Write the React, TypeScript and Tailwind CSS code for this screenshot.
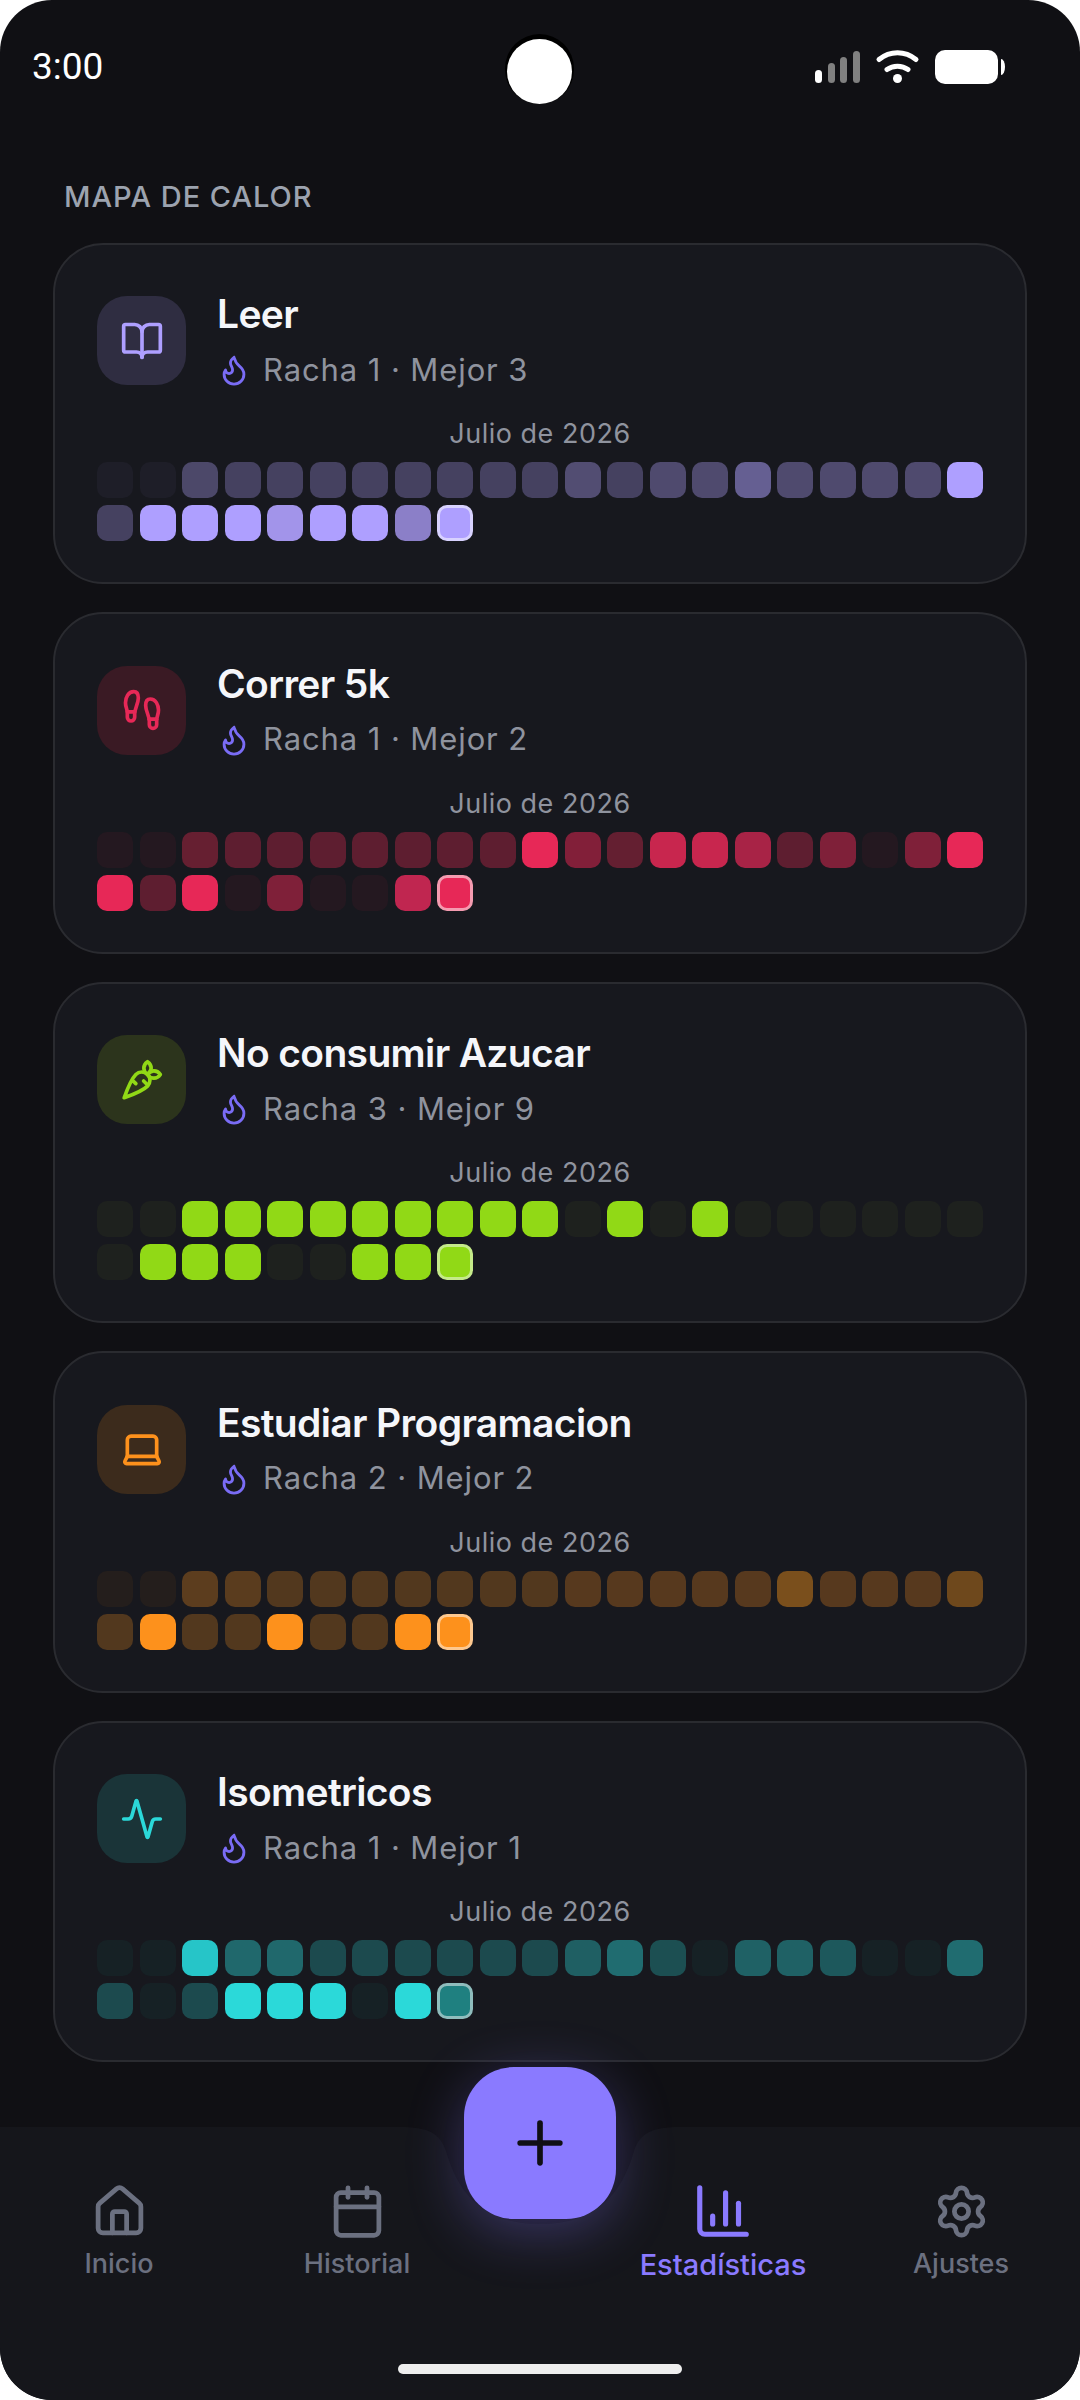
import { Activity, BookOpen, Calendar, Carrot, ChartColumn, Flame, Footprints, House, Laptop, Plus, Settings } from "lucide-react";
import type { LucideIcon } from "lucide-react";

type Habit = {
  name: string;
  streak: string;
  Icon: LucideIcon;
  iconBox: string;
  iconColor: string;
  todayRing: string;
  cells: string[];
};

const habits: Habit[] = [
  {
    name: "Leer",
    streak: "Racha 1 · Mejor 3",
    Icon: BookOpen,
    iconBox: "bg-[#2f2d41]",
    iconColor: "text-[#ae9fff]",
    todayRing: "border-[#d8d2ff]",
    cells: [
      "bg-[#1e1e28]", "bg-[#1e1e28]", "bg-[#4c4869]", "bg-[#454160]", "bg-[#454160]", "bg-[#454160]", "bg-[#454160]",
      "bg-[#454160]", "bg-[#454160]", "bg-[#454160]", "bg-[#454160]", "bg-[#524d72]", "bg-[#454160]", "bg-[#4f4a6e]",
      "bg-[#4f4a6e]", "bg-[#655f92]", "bg-[#4f4a6e]", "bg-[#4f4a6e]", "bg-[#4f4a6e]", "bg-[#4f4a6e]", "bg-[#ae9fff]",
      "bg-[#454160]", "bg-[#ae9fff]", "bg-[#ae9fff]", "bg-[#ae9fff]", "bg-[#a294ea]", "bg-[#ae9fff]", "bg-[#ae9fff]",
      "bg-[#8b7fc8]", "bg-[#ae9fff]",
    ],
  },
  {
    name: "Correr 5k",
    streak: "Racha 1 · Mejor 2",
    Icon: Footprints,
    iconBox: "bg-[#3a1a24]",
    iconColor: "text-[#e72857]",
    todayRing: "border-[#f49bb0]",
    cells: [
      "bg-[#241820]", "bg-[#241820]", "bg-[#661f31]", "bg-[#5e1e30]", "bg-[#5e1e30]", "bg-[#5e1e30]", "bg-[#5e1e30]",
      "bg-[#5e1e30]", "bg-[#5e1e30]", "bg-[#5e1e30]", "bg-[#e72857]", "bg-[#821f39]", "bg-[#641f31]", "bg-[#c8264e]",
      "bg-[#c8264e]", "bg-[#a82346]", "bg-[#5e1e30]", "bg-[#7f2039]", "bg-[#241820]", "bg-[#7f2039]", "bg-[#e72857]",
      "bg-[#e72857]", "bg-[#5e1e30]", "bg-[#e72857]", "bg-[#241820]", "bg-[#7f2039]", "bg-[#241820]", "bg-[#241820]",
      "bg-[#c02650]", "bg-[#e72857]",
    ],
  },
  {
    name: "No consumir Azucar",
    streak: "Racha 3 · Mejor 9",
    Icon: Carrot,
    iconBox: "bg-[#2c341c]",
    iconColor: "text-[#91d916]",
    todayRing: "border-[#c5ea8a]",
    cells: [
      "bg-[#1e211e]", "bg-[#1e211e]", "bg-[#91d916]", "bg-[#91d916]", "bg-[#91d916]", "bg-[#91d916]", "bg-[#91d916]",
      "bg-[#91d916]", "bg-[#91d916]", "bg-[#91d916]", "bg-[#91d916]", "bg-[#1e211e]", "bg-[#91d916]", "bg-[#1e211e]",
      "bg-[#91d916]", "bg-[#1e211e]", "bg-[#1e211e]", "bg-[#1e211e]", "bg-[#1e211e]", "bg-[#1e211e]", "bg-[#1e211e]",
      "bg-[#1e211e]", "bg-[#91d916]", "bg-[#91d916]", "bg-[#91d916]", "bg-[#1e211e]", "bg-[#1e211e]", "bg-[#91d916]",
      "bg-[#91d916]", "bg-[#91d916]",
    ],
  },
  {
    name: "Estudiar Programacion",
    streak: "Racha 2 · Mejor 2",
    Icon: Laptop,
    iconBox: "bg-[#3c2b1c]",
    iconColor: "text-[#fd911c]",
    todayRing: "border-[#fdc88f]",
    cells: [
      "bg-[#241e1c]", "bg-[#241e1c]", "bg-[#5c3d1e]", "bg-[#5a3c1e]", "bg-[#52381e]", "bg-[#52381e]", "bg-[#52381e]",
      "bg-[#52381e]", "bg-[#52381e]", "bg-[#52381e]", "bg-[#52381e]", "bg-[#57391e]", "bg-[#57391e]", "bg-[#57391e]",
      "bg-[#57391e]", "bg-[#57391e]", "bg-[#7a4f1c]", "bg-[#57391e]", "bg-[#57391e]", "bg-[#57391e]", "bg-[#6e481c]",
      "bg-[#52381e]", "bg-[#fd911c]", "bg-[#52381e]", "bg-[#52381e]", "bg-[#fd911c]", "bg-[#52381e]", "bg-[#52381e]",
      "bg-[#fd911c]", "bg-[#fd911c]",
    ],
  },
  {
    name: "Isometricos",
    streak: "Racha 1 · Mejor 1",
    Icon: Activity,
    iconBox: "bg-[#1a3438]",
    iconColor: "text-[#2bd9d9]",
    todayRing: "border-[#8fbdbd]",
    cells: [
      "bg-[#162125]", "bg-[#162125]", "bg-[#26c5c8]", "bg-[#20686c]", "bg-[#20686c]", "bg-[#1c4a4e]", "bg-[#1c4a4e]",
      "bg-[#1c4a4e]", "bg-[#1c4a4e]", "bg-[#1c4a4e]", "bg-[#1c4a4e]", "bg-[#1f5f63]", "bg-[#206c70]", "bg-[#1c4f52]",
      "bg-[#162125]", "bg-[#1f6165]", "bg-[#1f6165]", "bg-[#1d585c]", "bg-[#162125]", "bg-[#162125]", "bg-[#206c70]",
      "bg-[#1c4a4e]", "bg-[#162125]", "bg-[#1c4a4e]", "bg-[#2bd9d9]", "bg-[#2bd9d9]", "bg-[#2bd9d9]", "bg-[#162125]",
      "bg-[#2bd9d9]", "bg-[#1f8080]",
    ],
  },
];

function StatusIcons() {
  return (
    <svg width="200" height="40" viewBox="810 48 200 40" className="mr-[70px]">
      <rect x="815" y="71" width="7" height="13" rx="3.5" fill="#fff" />
      <rect x="828" y="64" width="7" height="20" rx="3.5" fill="#808080" />
      <rect x="840" y="58" width="7" height="26" rx="3.5" fill="#808080" />
      <rect x="853" y="52" width="7" height="32" rx="3.5" fill="#808080" />
      <path d="M879 60.500C890 51.500 905 51.500 916 60.500" fill="none" stroke="#fff" strokeWidth="5" strokeLinecap="round" />
      <path d="M887 70.500C893 66 902 66 908 70.500" fill="none" stroke="#fff" strokeWidth="5" strokeLinecap="round" />
      <circle cx="897.500" cy="79.500" r="4.500" fill="#fff" />
      <rect x="935" y="51" width="63" height="34" rx="10" fill="#fff" />
      <path d="M1001 60a4 8 0 0 1 4 8a4 8 0 0 1-4 8z" fill="#fff" />
    </svg>
  );
}

function HabitCard({ habit }: { habit: Habit }) {
  const { Icon } = habit;
  return (
    <div className="h-[341.5px] rounded-[50px] border-2 border-[#2a2b30] bg-[#17181e] px-[42px] pt-[44.5px]">
      <div className="flex items-center gap-[31px]">
        <div className={`flex h-[89px] w-[89px] shrink-0 items-center justify-center rounded-[30px] ${habit.iconBox} ${habit.iconColor}`}>
          <Icon size={44} />
        </div>
        <div className="flex flex-col gap-[9px]">
          <div className="text-[39px] leading-[50px] font-semibold tracking-[-0.65px] text-[#f5f6fa]">{habit.name}</div>
          <div className="flex h-[44px] items-center gap-[12px] text-[31px] tracking-[0.9px] text-[#8f939e]">
            <Flame size={34} className="text-[#7a6cf5]" />
            {habit.streak}
          </div>
        </div>
      </div>
      <div className="mt-[24px] text-center text-[27px] leading-[36px] tracking-[0.5px] text-[#8f939e]">Julio de 2026</div>
      <div className="mt-[10px] grid grid-cols-[repeat(21,36px)] gap-x-[6.5px] gap-y-[7px]">
        {habit.cells.map((cell, i) => (
          <div
            key={i}
            className={`h-[36px] w-[36px] rounded-[10px] ${cell} ${i === habit.cells.length - 1 ? `border-[3px] ${habit.todayRing}` : ""}`}
          />
        ))}
      </div>
    </div>
  );
}

function NavItem({ label, icon, active }: { label: string; icon: React.ReactNode; active?: boolean }) {
  return (
    <div className="flex w-[238px] flex-col items-center pt-[55px]">
      <div className="flex h-[58px] items-center justify-center">{icon}</div>
      <div className={active ? "mt-[7px] text-[29px] leading-[36px] font-medium text-[#8a7aff]" : "mt-[6px] text-[27px] leading-[36px] font-medium text-[#6b7080]"}>
        {label}
      </div>
    </div>
  );
}

export default function App() {
  return (
    <div className="h-[2400px] w-[1080px] bg-white font-['Inter',sans-serif]">
      <div className="flex h-full flex-col overflow-hidden rounded-[52px] bg-[#101014]">
        {/* Status bar */}
        <div className="relative flex h-[134px] shrink-0 items-center justify-between pl-[32px]">
          <span className="font-['Roboto',sans-serif] text-[37px] text-white">3:00</span>
          <div className="absolute top-[34px] left-[505px] h-[70px] w-[69px] rounded-full bg-black" />
          <div className="absolute top-[39px] left-[507px] h-[65px] w-[65px] rounded-full bg-white" />
          <StatusIcons />
        </div>

        <div className="flex-1 px-[53px] pt-[45px]">
          <div className="mb-[27.5px] pl-[11px] text-[29px] leading-[36px] font-medium tracking-[1px] text-[#9ca3af]">MAPA DE CALOR</div>
          <div className="flex flex-col gap-[28px]">
            {habits.map((habit) => (
              <HabitCard key={habit.name} habit={habit} />
            ))}
          </div>
        </div>

        {/* Bottom nav */}
        <div className="relative flex h-[273px] shrink-0 bg-[#15161b]">
          <svg width="1080" height="110" viewBox="0 0 1080 110" className="absolute top-0 left-0">
            <path d="M400 0C428 0 440 6 446 24C456 58 476 97 540 97C604 97 624 58 634 24C640 6 652 0 680 0Z" fill="#101014" />
          </svg>
          <NavItem label="Inicio" icon={<House size={57} className="text-[#6b7080]" />} />
          <NavItem label="Historial" icon={<Calendar size={57} className="text-[#6b7080]" />} />
          <div className="w-[128px] shrink-0" />
          <NavItem active label="Estadísticas" icon={<ChartColumn size={62} className="text-[#8a7aff]" />} />
          <NavItem label="Ajustes" icon={<Settings size={57} className="text-[#6b7080]" />} />

          <div className="absolute top-[-60px] left-[464px] flex h-[152px] w-[152px] items-center justify-center rounded-[50px] bg-[#8a7aff] text-[#101014] shadow-[0_12px_56px_rgba(138,122,255,0.32)]">
            <Plus size={68} />
          </div>
          <div className="absolute top-[237px] left-[398px] h-[10px] w-[284px] rounded-full bg-[#eeeeee]" />
        </div>
      </div>
    </div>
  );
}
